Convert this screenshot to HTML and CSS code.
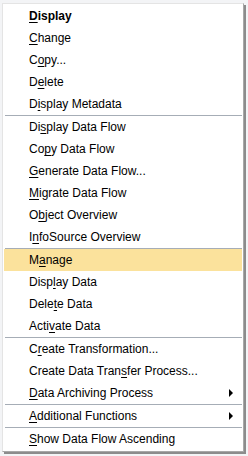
FILE: index.html
```html
<!DOCTYPE html>
<html lang="en">
<head>
  <meta charset="UTF-8" />
  <title>Context Menu</title>
  <link rel="stylesheet" href="styles.css">
</head>
<body>
  <div class="menu">
    <div class="item default"><u>D</u>isplay</div>
    <div class="item"><u>C</u>hange</div>
    <div class="item">C<u>o</u>py...</div>
    <div class="item">D<u>e</u>lete</div>
    <div class="item">D<u>i</u>splay Metadata</div>
    <div class="sep"></div>
    <div class="item">Di<u>s</u>play Data Flow</div>
    <div class="item">Co<u>p</u>y Data Flow</div>
    <div class="item"><u>G</u>enerate Data Flow...</div>
    <div class="item"><u>M</u>igrate Data Flow</div>
    <div class="item">O<u>b</u>ject Overview</div>
    <div class="item">I<u>n</u>foSource Overview</div>
    <div class="sep"></div>
    <div class="item active">M<u>a</u>nage</div>
    <div class="item">Disp<u>l</u>ay Data</div>
    <div class="item">Dele<u>t</u>e Data</div>
    <div class="item">Acti<u>v</u>ate Data</div>
    <div class="sep"></div>
    <div class="item">C<u>r</u>eate Transformation...</div>
    <div class="item">Create Data Tran<u>s</u>fer Process...</div>
    <div class="item sub"><u>D</u>ata Archiving Process</div>
    <div class="sep"></div>
    <div class="item sub"><u>A</u>dditional Functions</div>
    <div class="sep"></div>
    <div class="item"><u>S</u>how Data Flow Ascending</div>
  </div>
</body>
</html>
```

FILE: styles.css
```css
body {
  margin: 0;
  height: 456px;
  overflow: hidden;
  background: #f3f4f6;
  font-family: "Liberation Sans", Arial, sans-serif;
  font-size: 12px;
}

.menu {
  margin: 3px 0 0 2px;
  width: 238px;
  padding: 1px;
  background: #ffffff;
  border: 1px solid #e4e4e4;
  border-right-color: #a8a8a8;
  border-bottom-color: #a8a8a8;
  box-shadow: 2px 2px 0 #8c8c8c;
}

.item {
  position: relative;
  height: 22px;
  line-height: 22px;
  padding-left: 25px;
  color: #000000;
  white-space: nowrap;
}

.item u {
  text-decoration: underline;
  text-underline-offset: 2px;
}

.default {
  font-weight: bold;
}

.active {
  background: #fbe29c;
}

/* submenu arrow */
.sub::after {
  content: "";
  position: absolute;
  right: 9px;
  top: 7px;
  border-left: 4px solid #000000;
  border-top: 4px solid transparent;
  border-bottom: 4px solid transparent;
}

.sep {
  height: 1px;
  margin: 0 0 0 1px;
  background: #a6adb6;
}
```
